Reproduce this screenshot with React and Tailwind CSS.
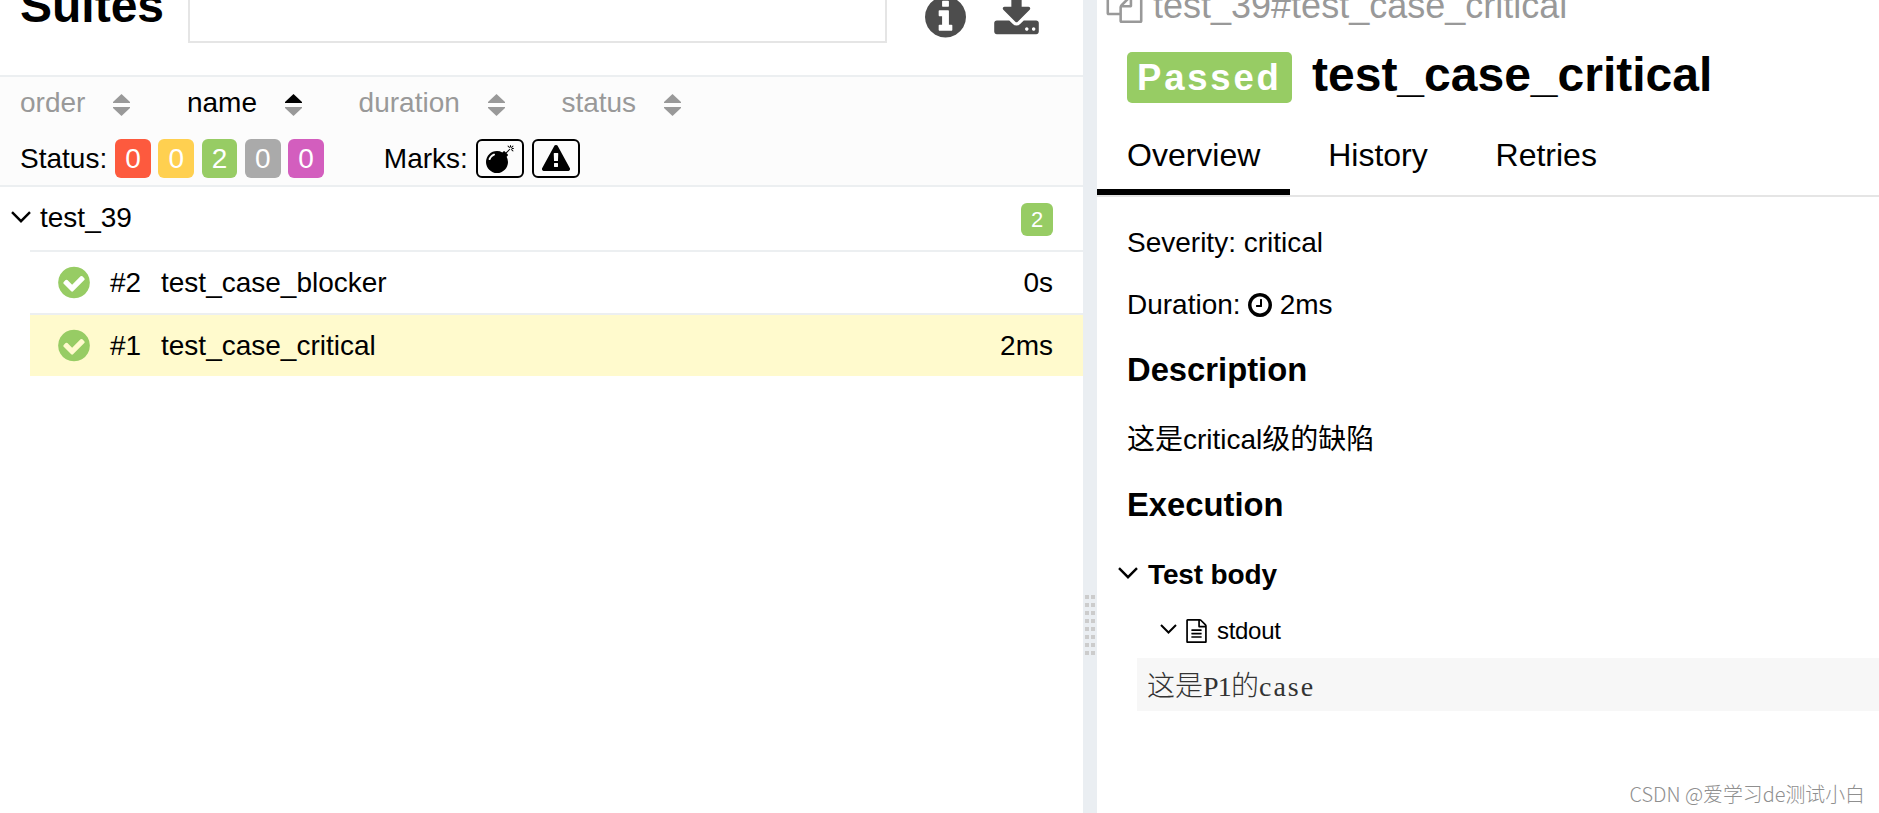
import React from 'react';

const CIRCLE = "M1536 640q0 -209 -103 -385.5t-279.5 -279.5t-385.5 -103t-385.5 103t-279.5 279.5t-103 385.5t103 385.5t279.5 279.5t385.5 103t385.5 -103t279.5 -279.5t103 -385.5z";

const icons = {
  info: {
    width: 1536,
    path: "M1024 160v160q0 14 -9 23t-23 9h-96v512q0 14 -9 23t-23 9h-320q-14 0 -23 -9t-9 -23v-160q0 -14 9 -23t23 -9h96v-320h-96q-14 0 -23 -9t-9 -23v-160q0 -14 9 -23t23 -9h448q14 0 23 9t9 23zM896 1056v160q0 14 -9 23t-23 9h-192q-14 0 -23 -9t-9 -23v-160q0 -14 9 -23t23 -9h192q14 0 23 9t9 23z" + CIRCLE,
  },
  download: {
    width: 1664,
    path: "M1280 192q0 26 -19 45t-45 19t-45 -19t-19 -45t19 -45t45 -19t45 19t19 45zM1536 192q0 26 -19 45t-45 19t-45 -19t-19 -45t19 -45t45 -19t45 19t19 45zM1664 416v-320q0 -40 -28 -68t-68 -28h-1472q-40 0 -68 28t-28 68v320q0 40 28 68t68 28h465l135 -136q58 -56 136 -56t136 56l136 136h464q40 0 68 -28t28 -68zM1339 985q17 -41 -14 -70l-448 -448q-18 -19 -45 -19t-45 19l-448 448q-31 29 -14 70q17 39 59 39h256v448q0 26 19 45t45 19h256q26 0 45 -19t19 -45v-448h256q42 0 59 -39z",
  },
  bomb: {
    width: 1792,
    path: "M571 947q-10 25 -34 35t-49 0q-108 -44 -191 -127t-127 -191q-10 -25 0 -49t35 -34q13 -5 24 -5q42 0 60 40q34 84 98.5 148.5t148.5 98.5q25 11 35 35t0 49zM1513 1303l46 -46l-244 -243l68 -68q19 -19 19 -45.5t-19 -45.5l-64 -64q89 -161 89 -343q0 -143 -55.5 -273.5t-150 -225t-225 -150t-273.5 -55.5t-273.5 55.5t-225 150t-150 225t-55.5 273.5t55.5 273.5t150 225t225 150t273.5 55.5q182 0 343 -89l64 64q19 19 45.5 19t45.5 -19l68 -68zM1521 1359q-10 -10 -22 -10q-13 0 -23 10l-91 90q-9 10 -9 23t9 23q10 9 23 9t23 -9l90 -91q10 -9 10 -22.5t-10 -22.5zM1751 1129q-11 -9 -23 -9t-23 9l-90 91q-10 9 -10 22.5t10 22.5q9 10 22.5 10t22.5 -10l91 -90q9 -10 9 -23t-9 -23zM1792 1312q0 -14 -9 -23t-23 -9h-96q-14 0 -23 9t-9 23t9 23t23 9h96q14 0 23 -9t9 -23zM1600 1504v-96q0 -14 -9 -23t-23 -9t-23 9t-9 23v96q0 14 9 23t23 9t23 -9t9 -23zM1751 1449l-91 -90q-10 -10 -22 -10q-13 0 -23 10q-10 9 -10 22.5t10 22.5l90 91q10 9 23 9t23 -9q9 -10 9 -23t-9 -23z",
  },
  warning: {
    width: 1792,
    path: "M1024 161v190q0 14 -9.5 23.5t-22.5 9.5h-192q-13 0 -22.5 -9.5t-9.5 -23.5v-190q0 -14 9.5 -23.5t22.5 -9.5h192q13 0 22.5 9.5t9.5 23.5zM1022 535l18 459q0 12 -10 19q-13 11 -24 11h-220q-11 0 -24 -11q-10 -7 -10 -21l17 -457q0 -10 10 -16.5t24 -6.5h185q14 0 23.5 6.5t10.5 16.5zM1008 1469l768 -1408q35 -63 -2 -126q-17 -29 -46.5 -46t-63.5 -17h-1536q-34 0 -63.5 17t-46.5 46q-37 63 -2 126l768 1408q17 31 47 49t65 18t65 -18t47 -49z",
  },
  clock: {
    width: 1536,
    path: "M896 992v-448q0 -14 -9 -23t-23 -9h-320q-14 0 -23 9t-9 23v64q0 14 9 23t23 9h224v352q0 14 9 23t23 9h64q14 0 23 -9t9 -23zM1312 640q0 148 -73 273t-198 198t-273 73t-273 -73t-198 -198t-73 -273t73 -273t198 -198t273 -73t273 73t198 198t73 273z" + CIRCLE,
  },
  check: {
    width: 1536,
    path: "M1284 802q0 28 -18 46l-91 90q-19 19 -45 19t-45 -19l-408 -407l-226 226q-19 19 -45 19t-45 -19l-91 -90q-18 -18 -18 -46q0 -27 18 -45l362 -362q19 -19 45 -19q27 0 46 19l543 543q18 18 18 45z" + CIRCLE,
  },
  copy: {
    width: 1792,
    path: "M1696 1152q40 0 68 -28t28 -68v-1216q0 -40 -28 -68t-68 -28h-960q-40 0 -68 28t-28 68v288h-544q-40 0 -68 28t-28 68v672q0 40 20 88t48 76l408 408q28 28 76 48t88 20h416q40 0 68 -28t28 -68v-328q68 40 128 40h416zM1152 939l-299 -299h299v299zM512 1323l-299 -299h299v299zM708 676l316 316v416h-384v-416q0 -40 -28 -68t-68 -28h-416v-640h512v256q0 40 20 88t48 76zM1664 -128v1152h-384v-416q0 -40 -28 -68t-68 -28h-416v-640h896z",
  },
  file: {
    width: 1536,
    path: "M1468 1156q28 -28 48 -76t20 -88v-1152q0 -40 -28 -68t-68 -28h-1344q-40 0 -68 28t-28 68v1600q0 40 28 68t68 28h896q40 0 88 -20t76 -48zM1024 1400v-376h376q-10 29 -22 41l-313 313q-12 12 -41 22zM1408 -128v1024h-416q-40 0 -68 28t-28 68v416h-768v-1536h1280zM384 736q0 14 9 23t23 9h704q14 0 23 -9t9 -23v-64q0 -14 -9 -23t-23 -9h-704q-14 0 -23 9t-9 23v64zM1120 512q14 0 23 -9t9 -23v-64q0 -14 -9 -23t-23 -9h-704q-14 0 -23 9t-9 23v64q0 14 9 23t23 9h704zM1120 256q14 0 23 -9t9 -23v-64q0 -14 -9 -23t-23 -9h-704q-14 0 -23 9t-9 23v64q0 14 9 23t23 9h704z",
  },
};

// glyphs use font units, so the y axis is flipped
const Icon = ({ name, className }) => (
  <svg viewBox={`0 -1536 ${icons[name].width} 1792`} fill="currentColor" className={`shrink-0 ${className}`}>
    <path transform="scale(1 -1)" d={icons[name].path} />
  </svg>
);

const Chevron = ({ className }) => (
  <svg viewBox="0 0 20 12" fill="none" stroke="currentColor" strokeWidth="2.4" className={`shrink-0 ${className}`}>
    <path d="M1 1.2 L10 10.2 L19 1.2" />
  </svg>
);

const sorters = [
  { label: "order" },
  { label: "name", active: true },
  { label: "duration" },
  { label: "status" },
];

const statuses = [
  { count: 0, color: "bg-[#fd5a3e]" },
  { count: 0, color: "bg-[#ffd050]" },
  { count: 2, color: "bg-[#97cc64]" },
  { count: 0, color: "bg-[#aaaaaa]" },
  { count: 0, color: "bg-[#d35ebe]" },
];

const cases = [
  { order: "#2", name: "test_case_blocker", duration: "0s" },
  { order: "#1", name: "test_case_critical", duration: "2ms", selected: true },
];

const tabs = ["Overview", "History", "Retries"];

const Sorter = ({ label, active }) => (
  <div className={`flex items-center gap-7 ${active ? "text-black" : "text-[#999]"}`}>
    <span className="mt-[2px]">{label}</span>
    <svg viewBox="0 0 17 22" className="w-[17px] h-[22px] mt-[6px]">
      <path d="M8.5 0 L17 8 V9 H0 V8 Z" fill={active ? "#000" : "#999"} />
      <path d="M8.5 22 L17 14 V13 H0 V14 Z" fill="#999" />
    </svg>
  </div>
);

const SuitesPanel = () => (
  <div className="w-[1083px] shrink-0">
    <div className="h-[75px] flex items-start pl-5">
      <h1 className="w-[168px] text-[48px] leading-[56px] font-bold -mt-[22px]">Suites</h1>
      <div className="w-[699px] h-[63px] -mt-5 border-2 border-[#e5e5e5]" />
      <div className="flex gap-[28px] ml-[38px] -mt-[7px] text-[#4d4d4d]">
        <Icon name="info" className="w-[41px] h-12" />
        <Icon name="download" className="w-[45px] h-12" />
      </div>
    </div>

    <div className="h-[112px] border-y-2 border-[#eceff1] bg-[#fcfcfc] pl-5">
      <div className="h-[50px] flex items-center gap-[56.6px]">
        {sorters.map((s) => <Sorter key={s.label} {...s} />)}
      </div>
      <div className="h-[39px] mt-3 flex items-center">
        <span>Status:</span>
        <div className="flex gap-[7.8px] ml-[8px]">
          {statuses.map((s, index) => (
            <span key={index} className={`w-[35.5px] h-[39px] leading-[39px] rounded-[6px] text-center text-white ${s.color}`}>
              {s.count}
            </span>
          ))}
        </div>
        <span className="ml-[60px]">Marks:</span>
        <div className="flex gap-2 ml-2">
          {["bomb", "warning"].map((mark) => (
            <span key={mark} className="w-12 h-[39px] rounded-[6px] border-2 border-black flex items-center justify-center">
              <Icon name={mark} className="w-7 h-7" />
            </span>
          ))}
        </div>
      </div>
    </div>

    <div className="h-[63px] flex items-center pl-[11px] pr-[30px]">
      <Chevron className="w-5 h-3 -mt-[3px]" />
      <span className="ml-[9px] -mt-[2px]">test_39</span>
      <span className="ml-auto mt-[2px] w-8 h-[33px] leading-[33px] rounded-[6px] bg-[#97cc64] text-white text-[22px] text-center">2</span>
    </div>
    {cases.map((c) => (
      <div
        key={c.name}
        className={`h-[63px] ml-[30px] pl-7 pr-[30px] flex items-center border-t-2 border-[#eceff1] ${c.selected ? "bg-[#fffacd]" : ""}`}
      >
        <Icon name="check" className="w-8 h-[37px] text-[#97cc64]" />
        <span className="w-[51px] ml-5">{c.order}</span>
        <span>{c.name}</span>
        <span className="ml-auto">{c.duration}</span>
      </div>
    ))}
  </div>
);

const Divider = () => (
  <div className="w-[14px] shrink-0 bg-[#eaeef2] pt-[595px]">
    <div className="grid grid-cols-2 gap-x-[2px] gap-y-1 w-[10px] mx-auto">
      {[...Array(16)].map((_, index) => <i key={index} className="w-1 h-1 bg-[#ccc]" />)}
    </div>
  </div>
);

const CasePanel = () => (
  <div className="flex-1 min-w-0">
    <div className="h-[41px] -mt-[15px] pl-[9px] flex items-center text-[36px] leading-[41px] text-[#999]">
      <Icon name="copy" className="w-[37px] h-9 -mt-[1px]" />
      <span className="ml-[10px]">test_39#test_case_critical</span>
    </div>
    <div className="h-[51px] mt-[26px] pl-[30px] flex items-center font-bold">
      <span className="h-[51px] leading-[52px] w-[165px] pl-[10px] rounded-[5px] bg-[#97cc64] text-white text-[36.5px] tracking-[2.8px]">Passed</span>
      <h2 className="ml-[20px] text-[48px] leading-[51px] -mt-[7px]">test_case_critical</h2>
    </div>

    <div className="mt-[17px] flex gap-[7.8px] text-[32px] leading-9 border-b-2 border-[#e5e5e5]">
      {tabs.map((tab, index) => (
        <div key={tab} className={`h-[75px] pt-[17px] px-[30px] border-b-[6px] ${index === 0 ? "border-black" : "border-transparent"}`}>
          {tab}
        </div>
      ))}
    </div>

    <div className="pl-[30px] leading-8">
      <div className="mt-[30px] h-8">Severity: critical</div>
      <div className="mt-[30px] h-8 flex items-center">
        <span>Duration:</span>
        <Icon name="clock" className="w-6 h-7 ml-[7px] -mt-[1px]" />
        <span className="ml-2">2ms</span>
      </div>
      <h3 className="mt-[30px] h-[38px] leading-[38px] text-[32.76px] font-bold">Description</h3>
      <div className="mt-[35px] h-8">这是critical级的缺陷</div>
      <h3 className="mt-[30px] h-[38px] leading-[38px] text-[32.76px] font-bold">Execution</h3>
      <div className="mt-[35px] h-8 -ml-[9px] flex items-center font-bold">
        <Chevron className="w-5 h-3 -mt-[4px]" />
        <span className="ml-[10px] tracking-[-0.15px]">Test body</span>
      </div>
      <div className="mt-6 h-8 pl-[33px] flex items-center text-[24px]">
        <Chevron className="w-[17px] h-[10px] -mt-[5px]" />
        <Icon name="file" className="w-[21px] h-6 ml-[9px] -mt-[1px]" />
        <span className="ml-[10px] tracking-[-0.3px]">stdout</span>
      </div>
      <pre className="mt-[11px] ml-[10px] h-[53px] pl-[10px] pt-1 leading-[49px] bg-[#f7f7f7] text-[#333] font-light font-['Liberation_Serif','Noto_Sans_CJK_SC',serif]">
        这是<span className="tracking-[-0.8px]">P1</span>的<span className="tracking-[2px]">case</span>
      </pre>
    </div>
  </div>
);

const App = () => {
  return (
    <div className="relative w-full h-screen overflow-hidden flex bg-white text-black text-[28px] leading-8 font-['Liberation_Sans','Noto_Sans_CJK_SC',sans-serif]">
      <SuitesPanel />
      <Divider />
      <CasePanel />
      <div className="absolute right-[14px] bottom-[5px] text-[19.9px] leading-7 text-[#8f8f8f] font-light font-['Noto_Sans_CJK_SC',sans-serif]">
        CSDN @爱学习de测试小白
      </div>
    </div>
  );
};

export default App;
